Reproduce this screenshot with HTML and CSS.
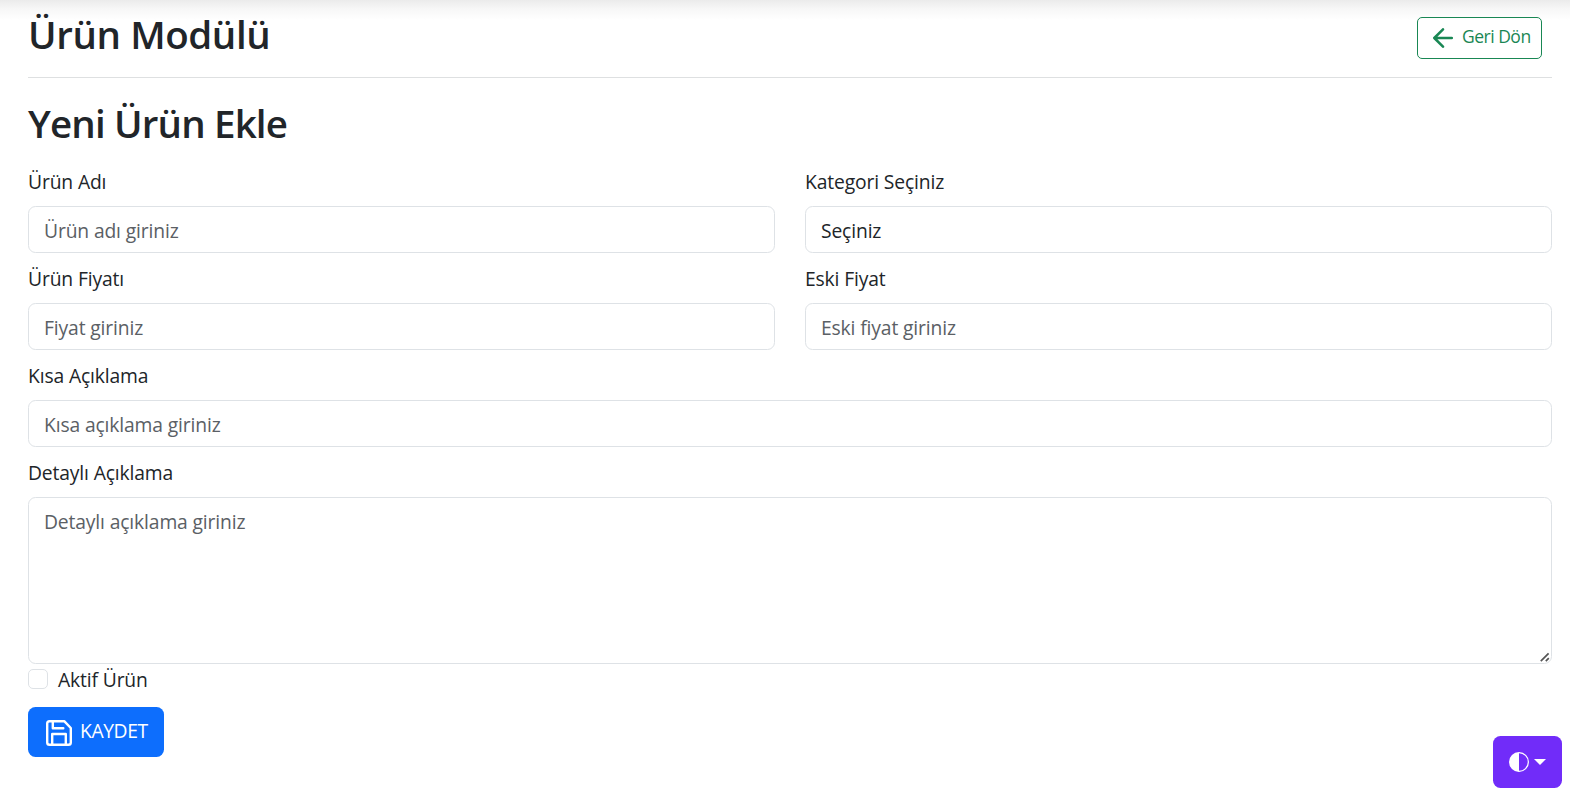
FILE: index.html
```html
<!DOCTYPE html>
<html lang="tr">
<head>
<meta charset="utf-8">
<title>Ürün Modülü</title>
<link rel="stylesheet" href="styles.css">
</head>
<body>
<div class="top-shadow"></div>
<main class="page">
  <header class="header">
    <h1 class="title title-module">Ürün Modülü</h1>
    <a class="btn-back">
      <svg class="arrow" viewBox="0 0 20 20"><path d="M18.8 10H1.5M10 1.3 1.3 10l8.7 8.7" fill="none" stroke="currentColor" stroke-width="2.5" stroke-linecap="round" stroke-linejoin="round"/></svg>
      <span class="back-text">Geri Dön</span>
    </a>
  </header>
  <h1 class="title title-new">Yeni Ürün Ekle</h1>
  <form class="form">
    <div class="field"><label class="label">Ürün Adı</label><input class="control" placeholder="Ürün adı giriniz"></div>
    <div class="field"><label class="label">Kategori Seçiniz</label><select class="control"><option>Seçiniz</option></select></div>
    <div class="field"><label class="label">Ürün Fiyatı</label><input class="control" placeholder="Fiyat giriniz"></div>
    <div class="field"><label class="label">Eski Fiyat</label><input class="control" placeholder="Eski fiyat giriniz"></div>
    <div class="field wide"><label class="label">Kısa Açıklama</label><input class="control" placeholder="Kısa açıklama giriniz"></div>
    <div class="field wide"><label class="label">Detaylı Açıklama</label><textarea class="control area" placeholder="Detaylı açıklama giriniz"></textarea>
      <svg class="grip" viewBox="0 0 10 10"><path d="M.8 9.2 8.6 1.4M5.8 9.2 8.8 6.2" fill="none" stroke="#555" stroke-width="1.7"/></svg>
    </div>
  </form>
  <label class="check"><input class="box" type="checkbox"><span class="check-text">Aktif Ürün</span></label>
  <button class="btn-save">
    <svg class="disk" viewBox="0 0 26 26" fill="none" stroke="currentColor" stroke-width="2.4" stroke-linejoin="round" stroke-linecap="round"><path d="M3.5 1.2H18.2L24.8 8V22.5a2.3 2.3 0 0 1-2.3 2.3H3.5a2.3 2.3 0 0 1-2.3-2.3V3.5a2.3 2.3 0 0 1 2.3-2.3Z"/><path d="M6.8 1.5V8.2H17.3M6.2 24.5V14H19.8V24.5"/></svg>
    <span class="save-text">KAYDET</span>
  </button>
</main>
<button class="theme">
  <svg class="half" viewBox="0 0 16 16" fill="currentColor"><path d="M8 15A7 7 0 1 0 8 1v14zm0 1A8 8 0 1 1 8 0a8 8 0 0 1 0 16z"/></svg>
  <span class="caret"></span>
</button>
</body>
</html>
```
FILE: styles.css
```css
* { box-sizing: border-box; }
body {
  margin: 0;
  height: 797px;
  overflow: hidden;
  background: #fff;
  color: #212529;
  font: 19.3px/30px "Open Sans", "Noto Sans", sans-serif;
  letter-spacing: -0.14px;
}
.top-shadow {
  position: absolute;
  inset: 0 0 auto;
  height: 20px;
  background: linear-gradient(#ebebeb, #f7f7f7 45%, #fff);
  z-index: -1;
}
.page { padding: 0 18px 0 28px; }
.header {
  display: flex;
  justify-content: space-between;
  align-items: flex-start;
  height: 78px;
  padding: 10px 10px 0 0;
  border-bottom: 1px solid #dee0e1;
}
.title { margin: 0; font-size: 38.5px; line-height: 48px; font-weight: 600; }
.title-module { letter-spacing: -0.4px; }
.title-new { margin-top: 21px; letter-spacing: -0.83px; }
.btn-back {
  display: flex;
  align-items: center;
  width: 125px;
  height: 42px;
  margin-top: 7px;
  padding-left: 15px;
  gap: 9px;
  border: 1px solid #198754;
  border-radius: 5px;
  color: #198754;
  font-size: 17.5px;
  letter-spacing: -0.5px;
  white-space: nowrap;
}
.back-text { padding-bottom: 4px; }
.arrow { width: 20px; height: 20px; flex: none; }
.form {
  display: grid;
  grid-template-columns: 1fr 1fr;
  column-gap: 30px;
  row-gap: 10px;
  margin-top: 19px;
}
.field { display: flex; flex-direction: column; gap: 10px; }
.wide { grid-column: 1 / -1; position: relative; }
.label { height: 30px; padding-top: 1px; }
.control {
  width: 100%;
  height: 47px;
  padding: 9px 15px 7px;
  border: 1px solid #dee2e6;
  border-radius: 7.5px;
  background: #fff;
  color: #212529;
  font: inherit;
  letter-spacing: inherit;
  appearance: none;
}
.control::placeholder { color: #5b6065; opacity: 1; }
.area { height: 167px; display: block; resize: none; }
.grip { position: absolute; right: 2.5px; bottom: 2px; width: 10px; height: 10px; }
.check { display: flex; align-items: center; height: 30px; gap: 10px; }
.check-text { padding-top: 2px; }
.box {
  appearance: none;
  width: 20px;
  height: 20px;
  margin: 0;
  border: 1px solid #dee2e6;
  border-radius: 5px;
}
.btn-save {
  display: flex;
  align-items: center;
  width: 136px;
  height: 50px;
  margin-top: 13px;
  padding: 0 0 0 18px;
  gap: 8px;
  border: 0;
  border-radius: 7.5px;
  background: #0d6efd;
  color: #fff;
  font: inherit;
  letter-spacing: -0.4px;
}
.save-text { padding-bottom: 2px; }
.disk { width: 26px; height: 26px; flex: none; margin-top: 2px; }
.theme {
  position: fixed;
  right: 8px;
  bottom: 9px;
  display: flex;
  align-items: center;
  width: 69px;
  height: 52px;
  padding: 0 0 0 16px;
  gap: 5px;
  border: 0;
  border-radius: 7.5px;
  background: #712cf9;
  color: #fff;
}
.half { width: 20px; height: 20px; }
.caret { border: 6px solid transparent; border-top-color: #fff; border-bottom: 0; }
```
